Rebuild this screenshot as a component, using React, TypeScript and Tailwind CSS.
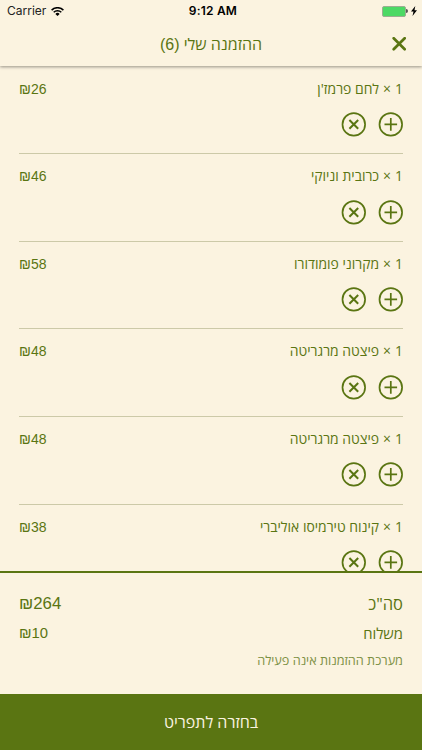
type Item = { name: string; price: number };

const items: Item[] = [
  { name: "לחם פרמז'ן", price: 26 },
  { name: 'כרובית וניוקי', price: 46 },
  { name: 'מקרוני פומודורו', price: 58 },
  { name: 'פיצטה מרגריטה', price: 48 },
  { name: 'פיצטה מרגריטה', price: 48 },
  { name: 'קינוח טירמיסו אוליברי', price: 38 },
];

function CircleIcon({ kind }: { kind: 'plus' | 'remove' }) {
  return (
    <svg className="block size-[25px]" viewBox="0 0 25 25" fill="none" stroke="currentColor" strokeWidth="1.7">
      <circle cx="12.8" cy="12.4" r="11.3" />
      {kind === 'plus' ? (
        <path d="M12.8 6.1v12.6M6.5 12.4h12.6" />
      ) : (
        <path d="M8.4 8l8.8 8.8M17.2 8l-8.8 8.8" strokeWidth="2" />
      )}
    </svg>
  );
}

function Price({ value, className }: { value: number; className: string }) {
  return (
    <span dir="ltr" className={`font-['Liberation_Sans',sans-serif] ${className}`}>
      ₪{value}
    </span>
  );
}

function StatusBar() {
  return (
    <div dir="ltr" className="grid h-[22px] grid-cols-3 items-center px-[7px] font-['Inter',sans-serif] text-[12px] leading-[22px] text-[#222]">
      <div className="flex items-center gap-[5px]">
        <span>Carrier</span>
        <svg className="h-[9px] w-[13px]" viewBox="0 0 13 9" fill="none" stroke="#000" strokeWidth="1.5">
          <path d="M.6 3.1a8.4 8.4 0 0 1 11.8 0M2.7 5.3a5.4 5.4 0 0 1 7.6 0" />
          <path d="M4.4 6.9a3 3 0 0 1 4.2 0L6.5 9z" fill="#000" stroke="none" />
        </svg>
      </div>
      <span className="pl-[4px] text-center font-semibold tracking-[0.2px] text-black">9:12 AM</span>
      <div className="-mr-[2px] flex items-center justify-end">
        <div className="h-[11px] w-[24px] rounded-[2px] border border-[#9cae91] bg-[#4cd964]" />
        <div className="h-[4px] w-[2px] rounded-r bg-[#555]" />
        <svg className="ml-[3px] h-[10px] w-[6px]" viewBox="0 0 6 10">
          <path d="M4.3 0L0 5.6h2.5L1.5 10 6 4.2H3.5z" />
        </svg>
      </div>
    </div>
  );
}

export default function App() {
  return (
    <div dir="rtl" className="flex h-[750px] w-[422px] flex-col overflow-hidden bg-[#fbf3e0] font-['Open_Sans','Noto_Sans',sans-serif] text-[#5a7512]">
      <header className="relative z-10 h-[66.4px] shrink-0 bg-[#fbf3e0] shadow-[0_1px_3px_rgba(0,0,0,0.4)]">
        <StatusBar />
        <div className="grid h-[44px] grid-cols-[40px_1fr_40px] items-center">
          <button aria-label="סגירה" className="mr-[16px] block w-[14px]">
            <svg className="block size-[14px]" viewBox="0 0 14 14" fill="none" stroke="currentColor" strokeWidth="2.7" strokeLinecap="round">
              <path d="M1.7 1.2l11 11M12.7 1.2l-11 11" />
            </svg>
          </button>
          <h1 className="text-center text-[16px] leading-[24px]">
            ההזמנה שלי <span className="font-['Liberation_Sans',sans-serif]">(6)</span>
          </h1>
        </div>
      </header>

      <main className="min-h-0 flex-1 overflow-hidden px-[19px] pt-[0.2px]">
        {items.map((item, i) => (
          <section key={i} className="h-[87.6px] border-b border-[#ccc9a8] pt-[11.1px]">
            <div className="flex h-[22px] items-center justify-between">
              <div className="flex items-center text-[13.9px] leading-[22px]">
                <span>1</span>
                <span className="mx-[4px]">×</span>
                <span className="whitespace-nowrap">{item.name}</span>
              </div>
              <Price value={item.price} className="text-[14px] leading-[22px]" />
            </div>
            <div className="mt-[12.3px] flex gap-[12px]">
              <button aria-label="הוספה"><CircleIcon kind="plus" /></button>
              <button aria-label="הסרה"><CircleIcon kind="remove" /></button>
            </div>
          </section>
        ))}
      </main>

      <section className="h-[123px] shrink-0 border-t-2 border-[#5a7512] px-[19px] pt-[18px]">
        <div className="flex h-[26px] items-center justify-between">
          <span className="text-[16.5px]">סה"כ</span>
          <Price value={264} className="text-[16.8px]" />
        </div>
        <div className="mt-[4px] flex h-[24px] items-center justify-between">
          <span className="text-[14.8px]">משלוח</span>
          <Price value={10} className="text-[14.8px]" />
        </div>
        <p className="mt-[5px] text-[12.7px] leading-[20px] text-[#7c9044]">מערכת ההזמנות אינה פעילה</p>
      </section>

      <button className="h-[56px] shrink-0 bg-[#5a7512] text-[16px] text-[#fbf3e0]">בחזרה לתפריט</button>
    </div>
  );
}
